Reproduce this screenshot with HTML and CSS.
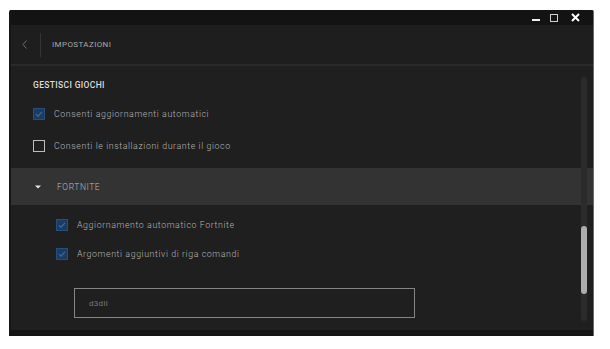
FILE: index.html
```html
<!DOCTYPE html>
<html lang="it">
<head>
<meta charset="utf-8">
<title>Impostazioni</title>
<link rel="stylesheet" href="styles.css">
</head>
<body>
<div class="window">
  <div class="titlebar">
    <span class="ctl ctl-min"></span>
    <span class="ctl ctl-max"></span>
    <svg class="ctl ctl-close" width="9" height="9" viewBox="0 0 9 9"><path d="M1 1 L8 8 M8 1 L1 8" stroke="#ffffff" stroke-width="2"/></svg>
  </div>
  <header class="header">
    <svg class="back" width="6" height="9" viewBox="0 0 6 9"><path d="M4.5 0.5 L1 4.5 L4.5 8.5" fill="none" stroke="#6f6f6f" stroke-width="1"/></svg>
    <span class="divider"></span>
    <span class="header-title">IMPOSTAZIONI</span>
  </header>
  <main class="content">
    <h2 class="section-title">GESTISCI GIOCHI</h2>
    <div class="row">
      <svg class="cb" width="12" height="12" viewBox="0 0 12 12"><rect x="0.5" y="0.5" width="11" height="11" fill="#1d3b61" stroke="#254f7d"/><path d="M3 6.2 L5.1 8.2 L9 3.8" fill="none" stroke="#3c6ea6" stroke-width="1.1"/></svg>
      <span class="label">Consenti aggiornamenti automatici</span>
    </div>
    <div class="row">
      <span class="cb cb-off"></span>
      <span class="label">Consenti le installazioni durante il gioco</span>
    </div>
    <div class="game-band">
      <svg class="caret" width="6" height="4" viewBox="0 0 6 4"><path d="M0 0.5 L6 0.5 L3 3.5 Z" fill="#e6e6e6"/></svg>
      <span class="game-name">FORTNITE</span>
    </div>
    <div class="sub">
      <div class="row row-sub">
        <svg class="cb" width="12" height="12" viewBox="0 0 12 12"><rect x="0.5" y="0.5" width="11" height="11" fill="#1d3b61" stroke="#254f7d"/><path d="M3 6.2 L5.1 8.2 L9 3.8" fill="none" stroke="#3c6ea6" stroke-width="1.1"/></svg>
        <span class="label">Aggiornamento automatico Fortnite</span>
      </div>
      <div class="row row-sub">
        <svg class="cb" width="12" height="12" viewBox="0 0 12 12"><rect x="0.5" y="0.5" width="11" height="11" fill="#1d3b61" stroke="#254f7d"/><path d="M3 6.2 L5.1 8.2 L9 3.8" fill="none" stroke="#3c6ea6" stroke-width="1.1"/></svg>
        <span class="label">Argomenti aggiuntivi di riga comandi</span>
      </div>
      <div class="args">d3dll</div>
    </div>
    <div class="scrollbar"><div class="thumb"></div></div>
  </main>
  <div class="bottom"></div>
</div>
</body>
</html>
```
FILE: styles.css
```css
* { box-sizing: border-box; }
html, body { margin: 0; padding: 0; background: #ffffff; }
body { font-family: Roboto, "Liberation Sans", sans-serif; }

.window {
  margin: 10px 0 0 9px;
  width: 585px;
  height: 326px;
  background: #1f1f1f;
  border-left: 2px solid #161616;
  border-right: 1px solid #6a6a6a;
  display: flex;
  flex-direction: column;
  border-radius: 2px 2px 0 0;
  overflow: hidden;
}

.titlebar {
  height: 15px;
  background: #131313;
  display: flex;
  align-items: center;
  justify-content: flex-end;
  padding-right: 13px;
}
.ctl { display: block; }
.ctl-min { width: 8px; height: 2px; background: #f0f0f0; margin-right: 10px; margin-top: 4px; }
.ctl-max { width: 8px; height: 8px; border: 1px solid #cfcfcf; margin-right: 13px; }
.ctl-close { width: 9px; height: 9px; }

.header {
  height: 41px;
  background: #1e1e1e;
  border-bottom: 2px solid #2a2a2a;
  display: flex;
  align-items: center;
  padding-left: 11px;
}
.back { display: block; }
.divider { width: 1px; height: 24px; background: #343434; margin-left: 12px; margin-right: 11px; }
.header-title { font-size: 8px; color: #a9a9a9; letter-spacing: 0.4px; font-weight: 400; }

.content {
  position: relative;
  flex: 1;
  background: #1f1f1f;
}
.section-title {
  margin: 13px 0 7px 22px;
  font-size: 8.5px;
  line-height: 12px;
  font-weight: 500;
  color: #dcdcdc;
  letter-spacing: 0.35px;
}
.row {
  height: 32px;
  display: flex;
  align-items: center;
  padding-left: 22px;
}
.row-sub { height: 29px; padding-left: 45px; }
.cb { display: block; width: 12px; height: 12px; flex: none; }
.cb-off { border: 1.5px solid #bdbdbd; background: #1f1f1f; }
.label {
  margin-left: 9px;
  font-size: 8.8px;
  color: #b6b6b6;
  font-weight: 300;
  letter-spacing: 0.6px;
}

.game-band {
  margin-top: 6px;
  height: 37px;
  background: #333333;
  display: flex;
  align-items: center;
  padding-left: 24px;
}
.caret { display: block; margin-top: 1px; }
.game-name { margin-left: 16px; font-size: 8.5px; color: #b9b9b9; letter-spacing: 0.55px; font-weight: 300; }

.sub { padding-top: 5px; }
.args {
  margin: 20px 0 0 63px;
  width: 341px;
  height: 30px;
  border: 1px solid #858585;
  padding-left: 14px;
  display: flex;
  align-items: center;
  font-size: 8px;
  color: #7a7a7a;
  letter-spacing: 0.3px;
}

.scrollbar {
  position: absolute;
  left: 570px;
  top: 11px;
  width: 6px;
  height: 244px;
  background: #2b2b2b;
  border-radius: 3px;
}
.thumb {
  margin-top: 149px;
  height: 68px;
  background: #adadad;
  border-radius: 3px;
}

.bottom { height: 6px; background: #141414; }
```
